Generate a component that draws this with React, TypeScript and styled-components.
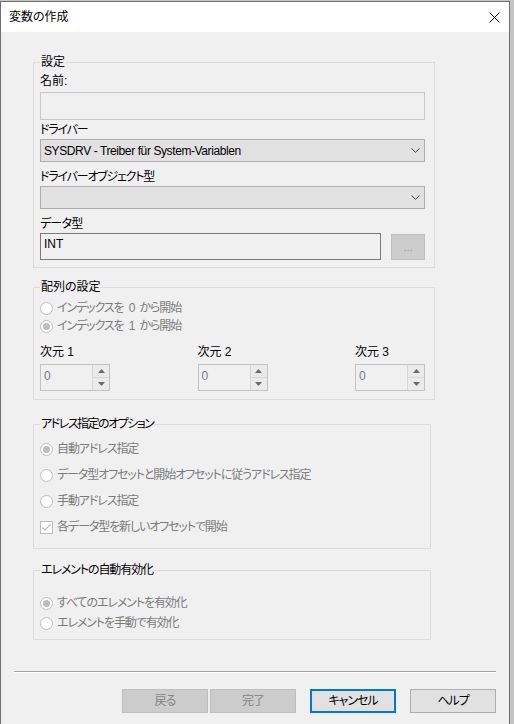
import styled, { createGlobalStyle } from 'styled-components'

const GlobalStyle = createGlobalStyle`
  html, body {
    margin: 0;
    padding: 0;
    background: #c4c4c4;
  }
  body {
    font-family: "Liberation Sans", "Noto Sans CJK JP", sans-serif;
    font-size: 12px;
    font-feature-settings: "palt";
    color: #000;
  }
`

const Window = styled.div`
  width: 510px;
  min-height: 723px;
  margin-top: 1px;
  box-sizing: border-box;
  border: 1px solid #707070;
  border-bottom: none;
  background: #f0f0f0;
  display: flex;
  flex-direction: column;
`

const TitleBar = styled.div`
  height: 30px;
  background: #fff;
  display: flex;
  align-items: center;
  justify-content: space-between;
  padding: 0 9px 0 8px;
`

const Title = styled.span`
  font-size: 12px;
  line-height: 16px;
`

const Body = styled.div`
  display: flex;
  flex-direction: column;
  padding: 0 13px;
`

const Group = styled.fieldset<{ $width: number; $gap: number; $pad: string }>`
  margin: ${({ $gap }) => $gap}px 0 0 19px;
  width: ${({ $width }) => $width}px;
  box-sizing: border-box;
  border: 1px solid #dcdcdc;
  padding: ${({ $pad }) => $pad};
  min-inline-size: 0;
`

const Legend = styled.legend<{ $tight?: number }>`
  padding: 0 1px;
  line-height: 16px;
  font-size: 12px;
  letter-spacing: ${({ $tight }) => $tight || 0}px;
`

const Label = styled.div<{ $top?: number; $tight?: number }>`
  line-height: 16px;
  height: 16px;
  margin-top: ${({ $top }) => $top || 0}px;
  letter-spacing: ${({ $tight }) => $tight || 0}px;
`

const NameInput = styled.div`
  margin-top: 3px;
  height: 28px;
  box-sizing: border-box;
  border: 1px solid #c8c8c8;
  background: #f0f0f0;
`

const Combo = styled.div`
  margin-top: 1px;
  height: 23px;
  box-sizing: border-box;
  border: 1px solid #adadad;
  background: #e1e1e1;
  display: flex;
  align-items: center;
  justify-content: space-between;
  padding: 0 4px 0 3px;
  line-height: 16px;
`

const ComboText = styled.span`
  letter-spacing: -0.4px;
`

const TypeRow = styled.div`
  margin-top: 1px;
  display: flex;
  align-items: center;
  gap: 10px;
  height: 27px;
`

const TextBox = styled.div`
  flex: 1;
  height: 27px;
  box-sizing: border-box;
  border: 1px solid #7a7a7a;
  background: #f0f0f0;
  padding: 2px 3px;
  line-height: 16px;
`

const BrowseButton = styled.div`
  width: 34px;
  height: 26px;
  box-sizing: border-box;
  border: 1px solid #bfbfbf;
  background: #cccccc;
  color: #8c8c9c;
  display: flex;
  align-items: center;
  justify-content: center;
  font-size: 11px;
`

const OptionRow = styled.div<{ $h: number }>`
  height: ${({ $h }) => $h}px;
  display: flex;
  align-items: center;
  gap: 4px;
  color: #7b7b7b;
  line-height: 16px;
  letter-spacing: -1.1px;
  word-spacing: 3px;
`

const DimRow = styled.div`
  margin-top: 9px;
  display: flex;
  justify-content: space-between;
`

const DimColumn = styled.div`
  width: 70px;
  display: flex;
  flex-direction: column;
`

const SpinBox = styled.div`
  margin-top: 4px;
  height: 27px;
  box-sizing: border-box;
  border: 1px solid #c2c2c2;
  background: #f0f0f0;
  display: flex;
`

const SpinValue = styled.div`
  flex: 1;
  padding-left: 3px;
  line-height: 22px;
  color: #7a7a8e;
`

const SpinButtons = styled.div`
  width: 16px;
  display: flex;
  flex-direction: column;
  border-left: 1px solid #d6d6d6;
  background: #ebebeb;
`

const SpinArrow = styled.div<{ $down?: boolean }>`
  flex: 1;
  display: flex;
  align-items: center;
  justify-content: center;
  border-top: ${({ $down }) => ($down ? '1px solid #d6d6d6' : 'none')};
`

const Separator = styled.div`
  margin-top: 31px;
  height: 1px;
  background: #a0a0a0;
  border-bottom: 1px solid #fff;
`

const ButtonBar = styled.div`
  margin-top: 16px;
  display: flex;
  justify-content: flex-end;
`

const DialogButton = styled.div<{ $variant: 'disabled' | 'default' | 'normal'; $gap: number }>`
  width: 86px;
  height: 24px;
  margin-left: ${({ $gap }) => $gap}px;
  box-sizing: border-box;
  display: flex;
  align-items: center;
  justify-content: center;
  line-height: 16px;
  letter-spacing: -1px;
  background: ${({ $variant }) => ($variant === 'disabled' ? '#cccccc' : '#e1e1e1')};
  color: ${({ $variant }) => ($variant === 'disabled' ? '#838383' : '#000')};
  border: ${({ $variant }) =>
    $variant === 'default'
      ? '2px solid #0078d7'
      : $variant === 'disabled'
        ? '1px solid #bfbfbf'
        : '1px solid #adadad'};
`

function CloseIcon() {
  return (
    <svg width="11" height="11" viewBox="0 0 11 11">
      <path d="M0.5 0.5 L10.5 10.5 M10.5 0.5 L0.5 10.5" stroke="#000" strokeWidth="1" />
    </svg>
  )
}

function Chevron() {
  return (
    <svg width="9" height="5" viewBox="0 0 9 5">
      <polyline points="0.5,0.5 4.5,4.3 8.5,0.5" fill="none" stroke="#3a3a3a" strokeWidth="1" />
    </svg>
  )
}

function Radio({ checked }: { checked?: boolean }) {
  return (
    <svg width="13" height="13" viewBox="0 0 13 13">
      <circle cx="6.5" cy="6.5" r="6" fill="#fff" stroke="#bcbcbc" strokeWidth="1" />
      {checked && <circle cx="6.5" cy="6.5" r="3.5" fill="#bcbcbc" />}
    </svg>
  )
}

function Check() {
  return (
    <svg width="13" height="13" viewBox="0 0 13 13">
      <rect x="0.5" y="0.5" width="12" height="12" fill="#fff" stroke="#bcbcbc" strokeWidth="1" />
      <polyline points="2.5,6.5 5,9 10.5,3.5" fill="none" stroke="#bcbcbc" strokeWidth="1.2" />
    </svg>
  )
}

function Spin({ label }: { label: string }) {
  return (
    <DimColumn>
      <Label>{label}</Label>
      <SpinBox>
        <SpinValue>0</SpinValue>
        <SpinButtons>
          <SpinArrow>
            <svg width="7" height="4" viewBox="0 0 7 4">
              <polygon points="0,4 3.5,0 7,4" fill="#6a6a6a" />
            </svg>
          </SpinArrow>
          <SpinArrow $down>
            <svg width="7" height="4" viewBox="0 0 7 4">
              <polygon points="0,0 7,0 3.5,4" fill="#6a6a6a" />
            </svg>
          </SpinArrow>
        </SpinButtons>
      </SpinBox>
    </DimColumn>
  )
}

export default function App() {
  return (
    <>
      <GlobalStyle />
      <Window>
        <TitleBar>
          <Title>変数の作成</Title>
          <CloseIcon />
        </TitleBar>
        <Body>
          <Group $width={402} $gap={22} $pad="3px 9px 7px 6px">
            <Legend>設定</Legend>
            <Label>名前:</Label>
            <NameInput />
            <Label $top={2} $tight={-1.2}>ドライバー</Label>
            <Combo>
              <ComboText>SYSDRV - Treiber für System-Variablen</ComboText>
              <Chevron />
            </Combo>
            <Label $top={7} $tight={-1.2}>ドライバーオブジェクト型</Label>
            <Combo>
              <span />
              <Chevron />
            </Combo>
            <Label $top={7} $tight={-0.8}>データ型</Label>
            <TypeRow>
              <TextBox>INT</TextBox>
              <BrowseButton>...</BrowseButton>
            </TypeRow>
          </Group>

          <Group $width={402} $gap={11} $pad="4px 9px 8px 6px">
            <Legend>配列の設定</Legend>
            <OptionRow $h={18}>
              <Radio />
              インデックスを 0 から開始
            </OptionRow>
            <OptionRow $h={18}>
              <Radio checked />
              インデックスを 1 から開始
            </OptionRow>
            <DimRow>
              <Spin label="次元 1" />
              <Spin label="次元 2" />
              <Spin label="次元 3" />
            </DimRow>
          </Group>

          <Group $width={398} $gap={16} $pad="4px 8px 8px 6px">
            <Legend $tight={-1.5}>アドレス指定のオプション</Legend>
            <OptionRow $h={26}>
              <Radio checked />
              自動アドレス指定
            </OptionRow>
            <OptionRow $h={26}>
              <Radio />
              データ型オフセットと開始オフセットに従うアドレス指定
            </OptionRow>
            <OptionRow $h={26}>
              <Radio />
              手動アドレス指定
            </OptionRow>
            <OptionRow $h={26}>
              <Check />
              各データ型を新しいオフセットで開始
            </OptionRow>
          </Group>

          <Group $width={398} $gap={13} $pad="15px 8px 6px 6px">
            <Legend $tight={-1.1}>エレメントの自動有効化</Legend>
            <OptionRow $h={20}>
              <Radio checked />
              すべてのエレメントを有効化
            </OptionRow>
            <OptionRow $h={20}>
              <Radio />
              エレメントを手動で有効化
            </OptionRow>
          </Group>

          <Separator />
          <ButtonBar>
            <DialogButton $variant="disabled" $gap={0}>戻る</DialogButton>
            <DialogButton $variant="disabled" $gap={2}>完了</DialogButton>
            <DialogButton $variant="default" $gap={14}>キャンセル</DialogButton>
            <DialogButton $variant="normal" $gap={14}>ヘルプ</DialogButton>
          </ButtonBar>
        </Body>
      </Window>
    </>
  )
}
